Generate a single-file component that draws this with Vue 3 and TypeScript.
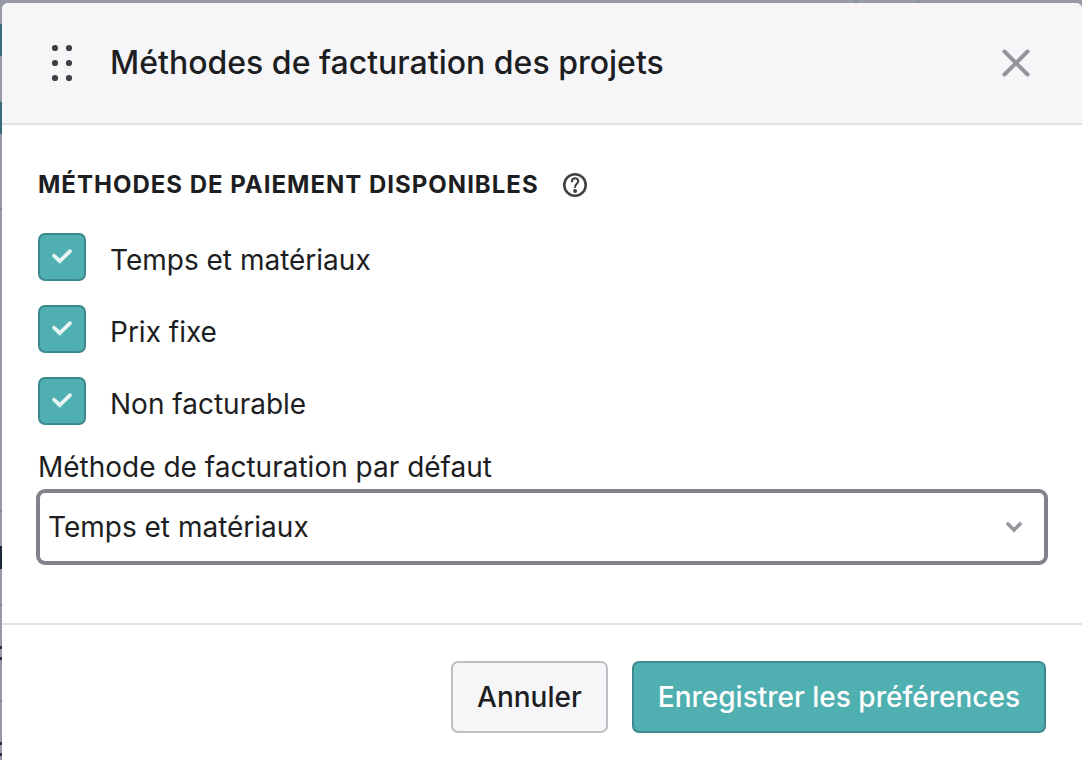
<script setup lang="ts">
import { ref } from 'vue'

interface BillingMethod {
  id: string
  label: string
  enabled: boolean
}

const methods = ref<BillingMethod[]>([
  { id: 'time', label: 'Temps et matériaux', enabled: true },
  { id: 'fixed', label: 'Prix fixe', enabled: true },
  { id: 'none', label: 'Non facturable', enabled: true },
])
const defaultMethod = ref('time')
</script>

<template>
  <div class="backdrop">
    <section class="modal" role="dialog" aria-labelledby="dialog-title">
      <header class="header">
        <svg class="grip" width="24" height="40" viewBox="0 0 24 40" aria-hidden="true">
          <g fill="#414145">
            <circle cx="5" cy="5" r="3.1" /><circle cx="19" cy="5" r="3.1" />
            <circle cx="5" cy="20" r="3.1" /><circle cx="19" cy="20" r="3.1" />
            <circle cx="5" cy="35" r="3.1" /><circle cx="19" cy="35" r="3.1" />
          </g>
        </svg>
        <h2 id="dialog-title" class="title">Méthodes de facturation des projets</h2>
        <button class="close" type="button" aria-label="Fermer">
          <svg width="28" height="28" viewBox="0 0 28 28" aria-hidden="true">
            <path d="M2.5 2.5L25.5 25.5M25.5 2.5L2.5 25.5" fill="none" stroke="#94949d" stroke-width="4" stroke-linecap="round" />
          </svg>
        </button>
      </header>

      <form id="billing" class="body" @submit.prevent>
        <fieldset class="group">
          <legend class="legend">
            <span class="legend-text">Méthodes de paiement disponibles</span>
            <button class="help" type="button" aria-label="Aide">
              <svg width="24" height="24" viewBox="0 0 24 24" fill="none" stroke="#414145" aria-hidden="true">
                <circle cx="12" cy="12" r="10.7" stroke-width="2.6" />
                <path d="M8.9 8.4C9.1 6.4 10.3 5.3 12.1 5.3C13.9 5.3 15.2 6.5 15.2 8.2C15.2 10.6 12.1 11 12.1 14" stroke-width="2.1" stroke-linecap="round" />
                <circle cx="12.1" cy="17.9" r="2" fill="#414145" stroke="none" />
              </svg>
            </button>
          </legend>
          <div class="options">
            <label v-for="m in methods" :key="m.id" class="option">
              <span class="box">
                <input v-model="m.enabled" class="check" type="checkbox" />
                <svg v-if="m.enabled" class="tick" width="24" height="20" viewBox="0 0 24 20" aria-hidden="true">
                  <path d="M4 8.7L9.7 14.2L20 4.2" fill="none" stroke="#e6f4f4" stroke-width="3.8" stroke-linecap="round" />
                </svg>
              </span>
              <span class="option-text">{{ m.label }}</span>
            </label>
          </div>
        </fieldset>

        <label class="select-label" for="default-method">Méthode de facturation par défaut</label>
        <div class="select-wrap">
          <select id="default-method" v-model="defaultMethod" class="select">
            <option v-for="m in methods" :key="m.id" :value="m.id">{{ m.label }}</option>
          </select>
          <svg class="chevron" width="16" height="12" viewBox="0 0 16 12" aria-hidden="true">
            <path d="M2 3L8 9L14 3" fill="none" stroke="#94949d" stroke-width="3.6" stroke-linecap="round" />
          </svg>
        </div>
      </form>

      <footer class="footer">
        <button class="btn secondary" type="button">Annuler</button>
        <button class="btn primary" type="submit" form="billing">Enregistrer les préférences</button>
      </footer>
    </section>
  </div>
</template>

<style>
body {
  margin: 0;
}
</style>

<style scoped>
* {
  box-sizing: border-box;
}

.backdrop {
  min-height: 100vh;
  display: flex;
  padding: 3px 0 0 2px;
  font-family: Inter, "Liberation Sans", sans-serif;
  font-size: 28px;
  color: #1d1e22;
  background:
    linear-gradient(#858b97, #858b97) 855px 0 / 2px 3px no-repeat,
    linear-gradient(#858b97, #858b97) 917px 0 / 2px 3px no-repeat,
    linear-gradient(#356b78, #356b78) 0 24px / 2px 32px no-repeat,
    linear-gradient(#356b78, #356b78) 0 102px / 2px 32px no-repeat,
    linear-gradient(#7e8491, #7e8491) 0 208px / 2px 2px no-repeat,
    linear-gradient(#7e8491, #7e8491) 0 510px / 2px 2px no-repeat,
    linear-gradient(#1e2538, #1e2538) 0 546px / 2px 23px no-repeat,
    linear-gradient(#7e8491, #7e8491) 0 604px / 2px 2px no-repeat,
    linear-gradient(#2b3144, #2b3144) 0 646px / 2px 3px no-repeat,
    linear-gradient(#2b3144, #2b3144) 0 657px / 2px 3px no-repeat,
    linear-gradient(#7e8491, #7e8491) 0 700px / 2px 2px no-repeat,
    linear-gradient(#2b3144, #2b3144) 0 742px / 2px 3px no-repeat,
    linear-gradient(#2b3144, #2b3144) 0 753px / 2px 3px no-repeat,
    #959aa5;
}

.modal {
  flex: 1;
  min-width: 0;
  display: flex;
  flex-direction: column;
  background: #fff;
  border-radius: 6px 6px 0 0;
  overflow: hidden;
}

.header {
  display: flex;
  align-items: center;
  min-height: 122px;
  padding: 0 48px;
  background: #f6f6f9;
  border-bottom: 2px solid #e3e3e5;
}

.grip {
  flex: none;
  margin-right: 36px;
}

.title {
  flex: 1;
  margin: 0;
  font-size: 32px;
  line-height: 40px;
  font-weight: 500;
}

button {
  font: inherit;
  color: inherit;
  cursor: pointer;
}

.close,
.help {
  display: flex;
  padding: 0;
  border: 0;
  background: none;
}

.close {
  padding: 4px;
}

.body {
  display: flex;
  flex-direction: column;
  padding: 36px 36px 60px;
}

.group {
  margin: 0 0 20px;
  padding: 0;
  border: 0;
  min-width: 0;
}

.legend {
  display: flex;
  align-items: center;
  gap: 24px;
  height: 48px;
  padding: 0;
}

.legend-text {
  font-size: 24px;
  line-height: 48px;
  font-weight: 700;
  letter-spacing: 1px;
  text-transform: uppercase;
}

.options {
  display: flex;
  flex-direction: column;
  gap: 24px;
  padding-top: 24px;
}

.option {
  display: flex;
  align-items: center;
  gap: 24px;
}

.box {
  display: grid;
  place-items: center;
}

.check,
.tick {
  grid-area: 1 / 1;
}

.tick {
  pointer-events: none;
}

.check {
  appearance: none;
  width: 48px;
  height: 48px;
  margin: 0;
  border: 2px solid #bfbfc5;
  border-radius: 7px;
  background: #fff;
}

.check:checked {
  border-color: #3d8a8e;
  background: #50afb1;
}

.option-text {
  padding-top: 6px;
  line-height: 42px;
}

.select-label {
  line-height: 44px;
  margin-bottom: 2px;
}

.select-wrap {
  display: grid;
  align-items: center;
}

.select,
.chevron {
  grid-area: 1 / 1;
}

.select {
  appearance: none;
  width: 100%;
  height: 72px;
  padding: 0 48px 0 8px;
  border: 2px solid #83828b;
  border-radius: 7px;
  box-shadow: 0 0 0 2px #83828b;
  outline: 0;
  background: #fff;
  color: inherit;
  font: inherit;
}

.chevron {
  justify-self: end;
  margin-right: 24px;
  pointer-events: none;
}

.footer {
  flex: 1;
  display: flex;
  justify-content: flex-end;
  align-items: flex-start;
  flex-wrap: wrap;
  gap: 24px;
  padding: 36px 36px 27px;
  border-top: 2px solid #e3e3e5;
}

.btn {
  height: 72px;
  padding: 0 24px;
  border: 2px solid #bfbfc5;
  border-radius: 7px;
  background: #f6f6f9;
  font-weight: 500;
}

.primary {
  border-color: #3d8a8e;
  background: #50afb1;
  color: #fff;
}
</style>
